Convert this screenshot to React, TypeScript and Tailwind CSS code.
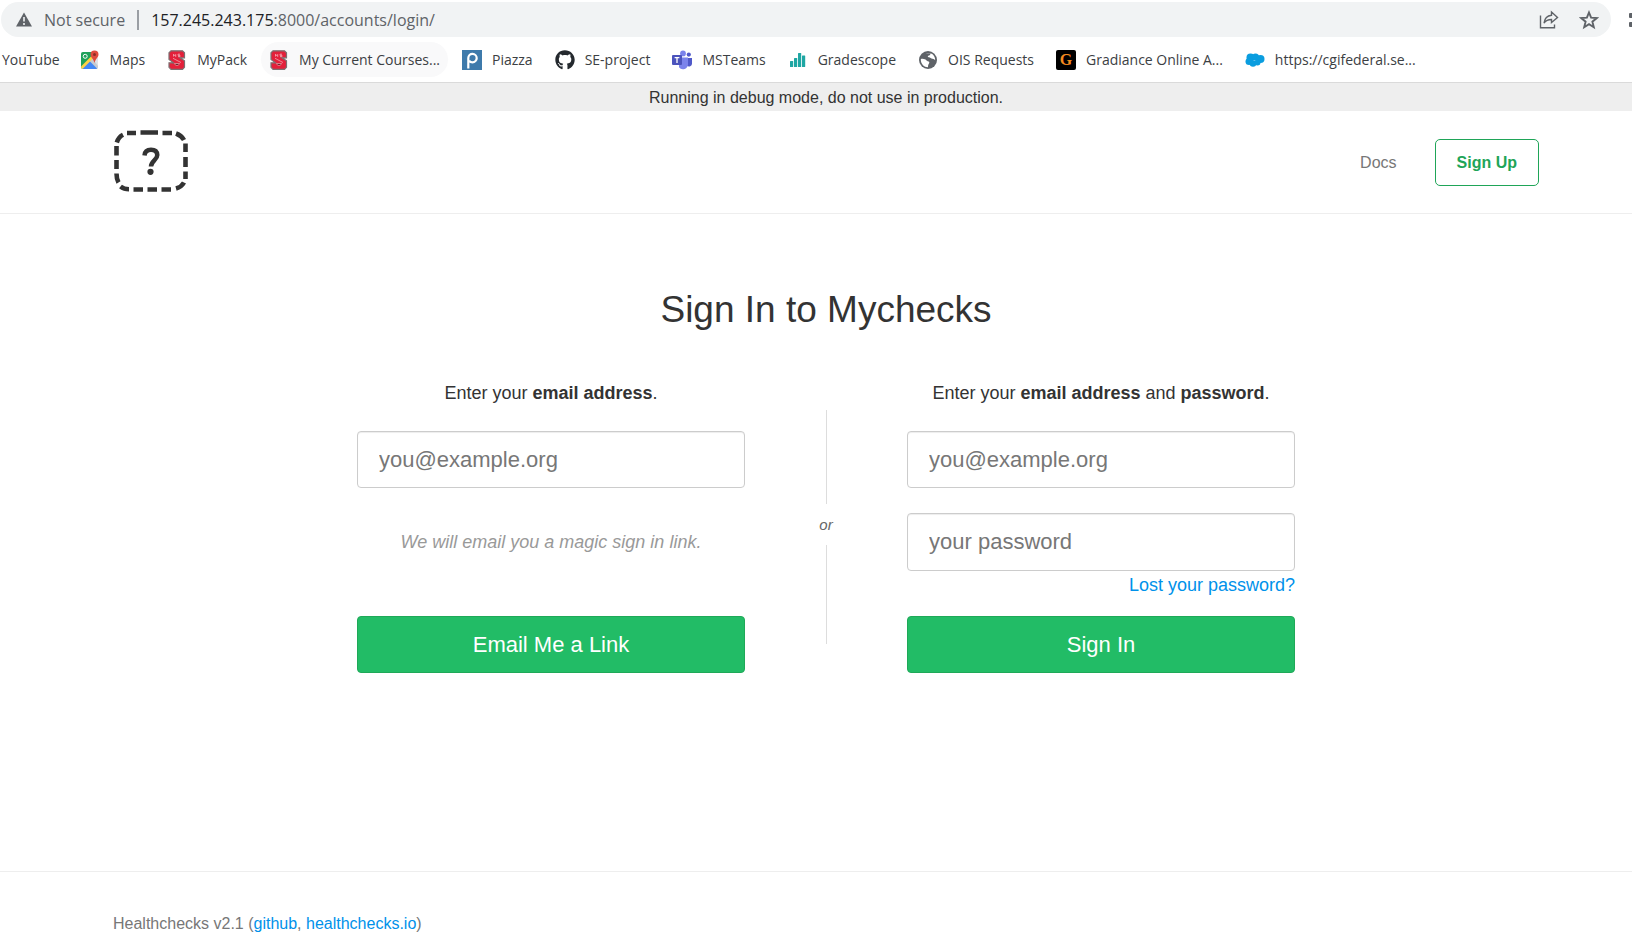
import { type ReactNode } from "react";
import { FaGithub } from "react-icons/fa";

function MapsIcon() {
  return (
    <svg viewBox="0 0 20 20" className="size-5 shrink-0" aria-hidden="true">
      <clipPath id="maps-tile">
        <rect x="1" y="2" width="17" height="17" rx="2" />
      </clipPath>
      <g clipPath="url(#maps-tile)">
        <rect width="20" height="20" fill="#dfe3e8" />
        <path d="M1 2h17L1 19z" fill="#1fa15a" />
        <path d="M12 8l7 9v2h-3L8.500 11.500z" fill="#c6cbd1" />
        <path d="M1 19L9.500 11l8 8z" fill="#4387f5" />
        <path d="M0 17.500L14.500 3l2 2L2.500 19H0z" fill="#fdd246" />
      </g>
      <circle cx="5.200" cy="6.300" r="2" fill="none" stroke="#fff" strokeWidth="1" />
      <path d="M14.500 0.500a4 4 0 0 1 4 4c0 3-3 4-4 8.500-1-4.500-4-5.500-4-8.500a4 4 0 0 1 4-4z" fill="#df4b3e" />
      <circle cx="14.500" cy="4.500" r="1.500" fill="#8c2f28" />
    </svg>
  );
}

function StateIcon() {
  return (
    <svg viewBox="0 0 20 20" className="size-5 shrink-0" aria-hidden="true">
      <path
        d="M4 0.800h11.500l2 2v5h-4.500l4.500 3v6.500l-2 2H4l-2-2v-4.500h4.500L2 9.500V2.800z"
        fill="#e3203a"
        stroke="#7d7072"
        strokeWidth="1.200"
      />
      <path d="M6.500 6.500V4.200l2.200 2.300V4.200M13 4.200h-2v1.200h2v1.200h-2" stroke="#f3a3ae" strokeWidth="0.900" fill="none" />
      <path d="M6 8.300l8 4.200" stroke="#f3a3ae" strokeWidth="0.800" />
      <path d="M7.500 13.500h5l-1.200 1.800H8.700z" fill="#5a1018" stroke="#f3a3ae" strokeWidth="0.700" />
    </svg>
  );
}

function PiazzaIcon() {
  return (
    <svg viewBox="0 0 20 20" className="size-5 shrink-0" aria-hidden="true">
      <rect width="20" height="20" fill="#3e7aab" />
      <path d="M6.300 18.500V8a4.200 4.200 0 1 1 4.200 4.300c-1.400 0-2.600-.6-3.400-1.600" fill="none" stroke="#fff" strokeWidth="2.200" />
    </svg>
  );
}

function TeamsIcon() {
  return (
    <svg viewBox="0 0 20 20" className="size-5 shrink-0" aria-hidden="true">
      <circle cx="16.800" cy="4.600" r="2.100" fill="#5059c9" />
      <circle cx="11" cy="3.400" r="2.900" fill="#7b83eb" />
      <path d="M14 8h6v5.500a3 3 0 0 1-5 2.300z" fill="#5059c9" />
      <path d="M7 7.500h9v6.500a5 5 0 0 1-9 3.200z" fill="#7b83eb" />
      <rect x="0" y="5" width="10" height="10" rx="1" fill="#4b53bc" />
      <path d="M2.600 7.700h4.800M5 7.700v5.300" stroke="#fff" strokeWidth="1.300" />
    </svg>
  );
}

function GradescopeIcon() {
  return (
    <svg viewBox="0 0 20 20" className="size-5 shrink-0" aria-hidden="true" fill="#1fa6a3">
      <rect x="2" y="11" width="3.200" height="6" rx="0.500" />
      <rect x="6" y="8" width="3.200" height="9" rx="0.500" />
      <rect x="10" y="3" width="3.200" height="14" rx="0.500" />
      <rect x="14" y="5.500" width="3.200" height="11.500" rx="0.500" />
    </svg>
  );
}

function GlobeIcon() {
  return (
    <svg viewBox="0 0 20 20" className="size-5 shrink-0" aria-hidden="true">
      <circle cx="10" cy="10" r="9" fill="#5f6368" />
      <path
        d="M2.800 9.200C4 8.500 6 9 7.500 9.600c1 .5 1 1.400 2.200 1.600 1.600.2 2 1 1.300 2.300-.7 1.200-1 1.800-1 3.700-4 0-7.300-3.300-7.200-8zM8 3.200c1-.3 3-.5 4.600.1-.2 1.500-1 2.200-2.300 2.400-.8.2-.6 1.400.4 1.500 1.800.1 2.200 1.300 3.800 1.500 1.300.2 2 .8 2.700 1.500.1-3.200-1.600-6-4.600-7"
        fill="#fff"
      />
    </svg>
  );
}

function GradianceIcon() {
  return (
    <span className="flex size-5 shrink-0 items-center justify-center rounded-xs bg-black font-['Liberation_Serif',serif] text-base leading-5 font-bold text-[#f58a1f]">
      G
    </span>
  );
}

function CloudIcon() {
  return (
    <svg viewBox="0 0 20 20" className="size-5 shrink-0" aria-hidden="true" fill="#0a9ddf">
      <circle cx="5.500" cy="7.500" r="4" />
      <circle cx="10.500" cy="7" r="3.600" />
      <circle cx="15.500" cy="9" r="4" />
      <circle cx="4" cy="11.500" r="3.500" />
      <circle cx="8" cy="13.500" r="3.300" />
      <circle cx="12.500" cy="12.500" r="3" />
    </svg>
  );
}

const bookmarks: { label: string; icon: ReactNode; active?: boolean }[] = [
  { label: "Maps", icon: <MapsIcon /> },
  { label: "MyPack", icon: <StateIcon /> },
  { label: "My Current Courses...", icon: <StateIcon />, active: true },
  { label: "Piazza", icon: <PiazzaIcon /> },
  { label: "SE-project", icon: <FaGithub className="size-5 shrink-0 text-[#24292e]" /> },
  { label: "MSTeams", icon: <TeamsIcon /> },
  { label: "Gradescope", icon: <GradescopeIcon /> },
  { label: "OIS Requests", icon: <GlobeIcon /> },
  { label: "Gradiance Online A...", icon: <GradianceIcon /> },
  { label: "https://cgifederal.se...", icon: <CloudIcon /> },
];

function BrowserBar() {
  return (
    <div className="border-b border-[#dadada] bg-white font-['Open_Sans','Noto_Sans',sans-serif]">
      <div className="flex items-center gap-[18px] overflow-hidden pt-[2px] pl-px">
        <div className="flex h-[35px] min-w-0 grow items-center rounded-full bg-[#f1f3f4] pr-3 pl-[15px] text-base text-[#5f6368]">
          <svg viewBox="0 0 16 15" className="h-[15px] w-4 shrink-0" aria-hidden="true">
            <path d="M8 0.500L16 14.500H0z" fill="#5f6368" />
            <path d="M8 5v4.500M8 11v2" stroke="#f1f3f4" strokeWidth="1.600" />
          </svg>
          <span className="ml-3">Not secure</span>
          <span className="mx-3 h-5 w-[2px] bg-[#9a9ea3]" />
          <span className="grow">
            <span className="text-[#202124]">157.245.243.175</span>:8000/accounts/login/
          </span>
          <button type="button" aria-label="Share" className="mr-5">
            <svg viewBox="0 0 20 20" className="size-5" fill="none" stroke="#5f6368" strokeWidth="1.400">
              <path d="M1.500 5.500v12.300h14V14.500" />
              <path d="M12.500 2l6 5.500-6 5V9.500c-3.500 0-5.700 1-7.500 3.500.6-4.300 3-7.200 7.500-7.700z" />
            </svg>
          </button>
          <button type="button" aria-label="Bookmark this page">
            <svg viewBox="0 0 20 20" className="size-5" fill="none" stroke="#5f6368" strokeWidth="1.900">
              <path d="M10 2.500l2.100 5.200 5.600.4-4.300 3.600 1.400 5.500L10 14.200l-4.800 3 1.400-5.500L2.300 8.100l5.600-.4z" />
            </svg>
          </button>
        </div>
        <svg viewBox="0 0 3 16" className="h-4 w-[3px] shrink-0" fill="#5f6368" aria-hidden="true">
          <rect x="0" y="1" width="4" height="5" rx="1" />
          <rect x="0" y="10" width="4" height="5" rx="1" />
        </svg>
      </div>
      <nav className="mt-[5px] mb-[5px] flex gap-1.5 text-sm whitespace-nowrap text-[#3c4043]">
        <a href="#youtube" className="flex h-[35px] items-center pr-1.5 pl-[2px]">
          YouTube
        </a>
        {bookmarks.map((b) => (
          <a
            key={b.label}
            href="#bookmark"
            className={`flex h-[35px] items-center gap-[10px] rounded-full px-2 ${b.active ? "bg-[#f9f9fa]" : ""}`}
          >
            {b.icon}
            {b.label}
          </a>
        ))}
      </nav>
    </div>
  );
}

function Logo() {
  return (
    <svg viewBox="0 0 74 62" className="h-[62px] w-[74px]" role="img" aria-label="Mychecks">
      <g fill="none" stroke="#333" strokeWidth="4.600">
        <path d="M26.500 2.500H44M13 3h9M48.500 3H58" />
        <path d="M2.800 12.500Q4.500 7 9 4.800M62 3.500Q67.500 5.500 70 10" />
        <path d="M2.500 16v9.500M2.500 30v9M71.500 13.500V22M71.500 27v10M71.500 41.500V49" />
        <path d="M2.500 43.500Q2.500 49 4.500 52.500M6.500 56.500Q10 59.300 15 59.300M62 58.500Q67.500 57 70 52.500" />
        <path d="M19.500 59.500H29M33.500 59.500H43M47.500 59.500H57" />
      </g>
      <path d="M30.500 25.500Q31 19.800 37 19.800t6.300 5.300c0 5-6.300 5.700-6.300 11.500" fill="none" stroke="#333" strokeWidth="4.500" />
      <circle cx="36.500" cy="41.800" r="3.100" fill="#333" />
    </svg>
  );
}

const inputClass =
  "w-full rounded-[4px] border border-[#ccc] bg-white px-[21px] text-[22px] text-[#333] shadow-[inset_0_1px_1px_rgba(0,0,0,0.075)] placeholder:text-[#777] placeholder:opacity-100";
const buttonClass =
  "h-[57px] w-full rounded-[4px] border border-[#1fa958] bg-[#22bc66] text-[22px] text-white";

export default function App() {
  return (
    <div className="min-h-screen overflow-x-hidden bg-white font-['Liberation_Sans',Arial,sans-serif] text-[#333]">
      <BrowserBar />
      <p className="bg-[#eee] pt-[2px] pl-5 text-center text-base leading-[26px]">
        Running in debug mode, do not use in production.
      </p>
      <header className="border-b border-[#eee] pr-[93px] pl-[114px]">
        <div className="flex h-[102px] items-center justify-between">
          <a href="#home" className="pb-[2px]">
            <Logo />
          </a>
          <nav className="flex items-center gap-[38px] pt-px text-base">
            <a href="#docs" className="text-[#777]">
              Docs
            </a>
            <a
              href="#signup"
              className="flex h-[47px] items-center rounded-[5px] border border-[#1fa558] px-[21px] font-bold text-[#1fa558]"
            >
              Sign Up
            </a>
          </nav>
        </div>
      </header>

      <main className="pt-[73px] pb-[198px] pl-5 text-lg leading-6">
        <h1 className="text-center text-[37px] leading-[46px]">Sign In to Mychecks</h1>
        <div className="mt-12 flex justify-center">
          <form className="w-[388px]" onSubmit={(e) => e.preventDefault()}>
            <p className="mb-[26px] text-center">
              <label htmlFor="link-email">
                Enter your <strong>email address</strong>.
              </label>
            </p>
            <input id="link-email" type="email" placeholder="you@example.org" className={`${inputClass} h-[57px]`} />
            <p className="mt-[42px] mb-[62px] text-center text-[#999] italic">
              We will email you a magic sign in link.
            </p>
            <button type="submit" className={buttonClass}>
              Email Me a Link
            </button>
          </form>
          <div className="flex w-[162px] flex-col items-center pt-[29px] pb-[29px] text-[15px] leading-5 text-[#666] italic">
            <span className="h-[94px] w-px bg-[#ddd]" />
            <span className="pt-[11px] pb-[10px]">or</span>
            <span className="w-px grow bg-[#ddd]" />
          </div>
          <form className="w-[388px]" onSubmit={(e) => e.preventDefault()}>
            <p className="mb-[26px] text-center">
              <label htmlFor="email">
                Enter your <strong>email address</strong> and <strong>password</strong>.
              </label>
            </p>
            <input id="email" type="email" placeholder="you@example.org" className={`${inputClass} h-[57px]`} />
            <input
              type="password"
              aria-label="Password"
              placeholder="your password"
              className={`${inputClass} mt-[25px] h-[58px]`}
            />
            <div className="mt-[2px] mb-[19px] text-right">
              <a href="#lost" className="text-[#0091ea]">
                Lost your password?
              </a>
            </div>
            <button type="submit" className={buttonClass}>
              Sign In
            </button>
          </form>
        </div>
      </main>

      <footer className="border-t border-[#eee] pt-10 pb-3 pl-[113px] text-base leading-6 text-[#777]">
        Healthchecks v2.1 (
        <a href="#github" className="text-[#0091ea]">
          github
        </a>
        ,{" "}
        <a href="#healthchecks" className="text-[#0091ea]">
          healthchecks.io
        </a>
        )
      </footer>
    </div>
  );
}
